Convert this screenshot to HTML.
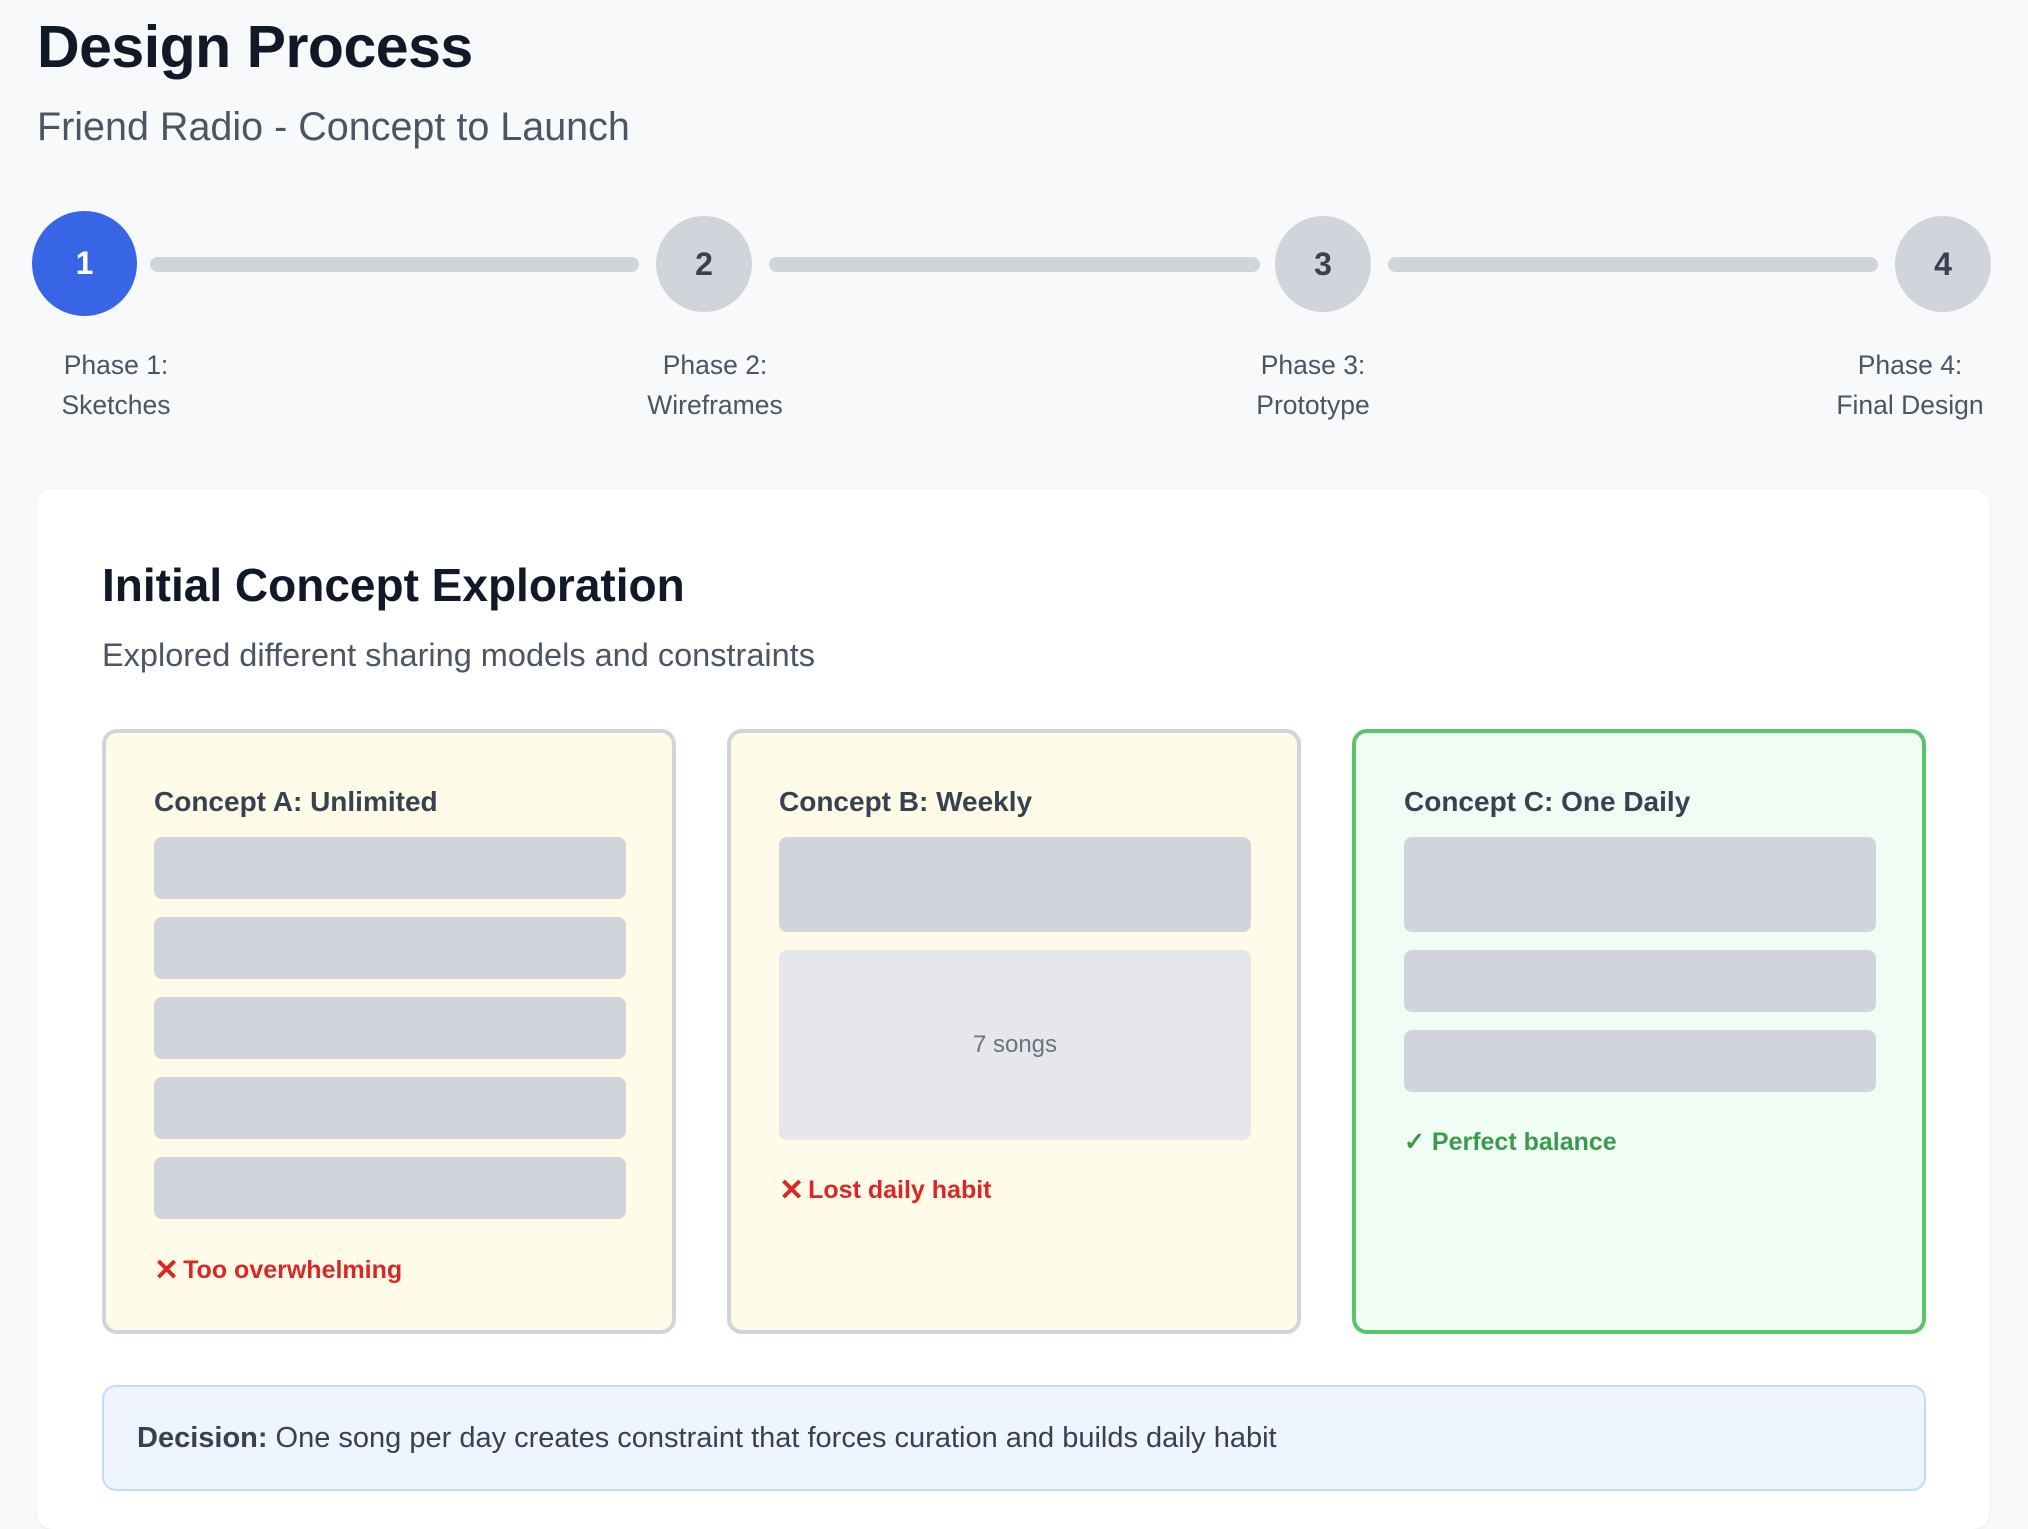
<!DOCTYPE html>
<html><head><meta charset="utf-8"><style>
*{margin:0;padding:0;box-sizing:border-box}
body{width:2028px;height:1518px;background:#f8f9fb;font-family:"Liberation Sans",sans-serif;position:relative;overflow:hidden;color:#111827}
.a{position:absolute}
h1{position:absolute;left:37px;top:13px;font-size:59px;font-weight:700;color:#111827;letter-spacing:-0.5px}
.sub{left:37px;top:105px;font-size:39.5px;color:#4b5563}
.circ{position:absolute;border-radius:50%;display:flex;align-items:center;justify-content:center;font-weight:700;font-size:32px}
.line{position:absolute;top:257px;height:15px;background:#d1d5db;border-radius:8px}
.lab{position:absolute;top:345px;font-size:26.5px;line-height:40px;color:#4b5563;text-align:center;width:240px}
.card{left:37px;top:489px;width:1952px;height:1040px;background:#fff;border-radius:16px;box-shadow:0 1px 4px rgba(0,0,0,.06)}
.box{position:absolute;top:729px;width:574px;height:605px;border:4px solid #d1d5db;border-radius:15px;background:#fefce8}
.bt{position:absolute;left:48px;top:53px;font-size:28px;font-weight:700;color:#374151}
.bar{position:absolute;left:48px;width:472px;background:#d1d5db;border-radius:8px}
.st{position:absolute;left:48px;font-size:25px;font-weight:700}
.x{display:inline-block;font-size:30px;margin-right:4px;vertical-align:-2px}
</style></head><body>
<h1>Design Process</h1>
<div class="a sub">Friend Radio - Concept to Launch</div>

<div class="circ" style="left:32px;top:211px;width:105px;height:105px;background:#3765e5;color:#fff">1</div>
<div class="circ" style="left:656px;top:216px;width:96px;height:96px;background:#d1d5db;color:#374151">2</div>
<div class="circ" style="left:1275px;top:216px;width:96px;height:96px;background:#d1d5db;color:#374151">3</div>
<div class="circ" style="left:1895px;top:216px;width:96px;height:96px;background:#d1d5db;color:#374151">4</div>
<div class="line" style="left:150px;width:489px"></div>
<div class="line" style="left:769px;width:491px"></div>
<div class="line" style="left:1388px;width:490px"></div>
<div class="lab" style="left:-4px">Phase 1:<br>Sketches</div>
<div class="lab" style="left:595px">Phase 2:<br>Wireframes</div>
<div class="lab" style="left:1193px">Phase 3:<br>Prototype</div>
<div class="lab" style="left:1790px">Phase 4:<br>Final Design</div>

<div class="a card"></div>
<div class="a" style="left:102px;top:558px;font-size:46px;font-weight:700;color:#111827">Initial Concept Exploration</div>
<div class="a" style="left:102px;top:637px;font-size:32.5px;color:#4b5563">Explored different sharing models and constraints</div>

<div class="box" style="left:102px">
<div class="bt">Concept A: Unlimited</div>
<div class="bar" style="top:104px;height:62px"></div>
<div class="bar" style="top:184px;height:62px"></div>
<div class="bar" style="top:264px;height:62px"></div>
<div class="bar" style="top:344px;height:62px"></div>
<div class="bar" style="top:424px;height:62px"></div>
<div class="st" style="top:520px;color:#dc2626"><span class="x">✕</span>Too overwhelming</div>
</div>
<div class="box" style="left:727px">
<div class="bt">Concept B: Weekly</div>
<div class="bar" style="top:104px;height:95px"></div>
<div class="bar" style="top:217px;height:190px;background:#e5e7eb;display:flex;align-items:center;justify-content:center;font-size:24px;color:#6b7280">7 songs</div>
<div class="st" style="top:440px;color:#dc2626"><span class="x">✕</span>Lost daily habit</div>
</div>
<div class="box" style="left:1352px;background:#f0fdf4;border-color:#5bc46a">
<div class="bt">Concept C: One Daily</div>
<div class="bar" style="top:104px;height:95px"></div>
<div class="bar" style="top:217px;height:62px"></div>
<div class="bar" style="top:297px;height:62px"></div>
<div class="st" style="top:394px;color:#3b9b4b">✓ Perfect balance</div>
</div>

<div class="a" style="left:102px;top:1385px;width:1824px;height:106px;background:#eff5fe;border:2px solid #bfdbfe;border-radius:14px;display:flex;align-items:center;padding-left:33px;font-size:29px;color:#374151"><b style="margin-right:8px">Decision:</b>One song per day creates constraint that forces curation and builds daily habit</div>
</body></html>
